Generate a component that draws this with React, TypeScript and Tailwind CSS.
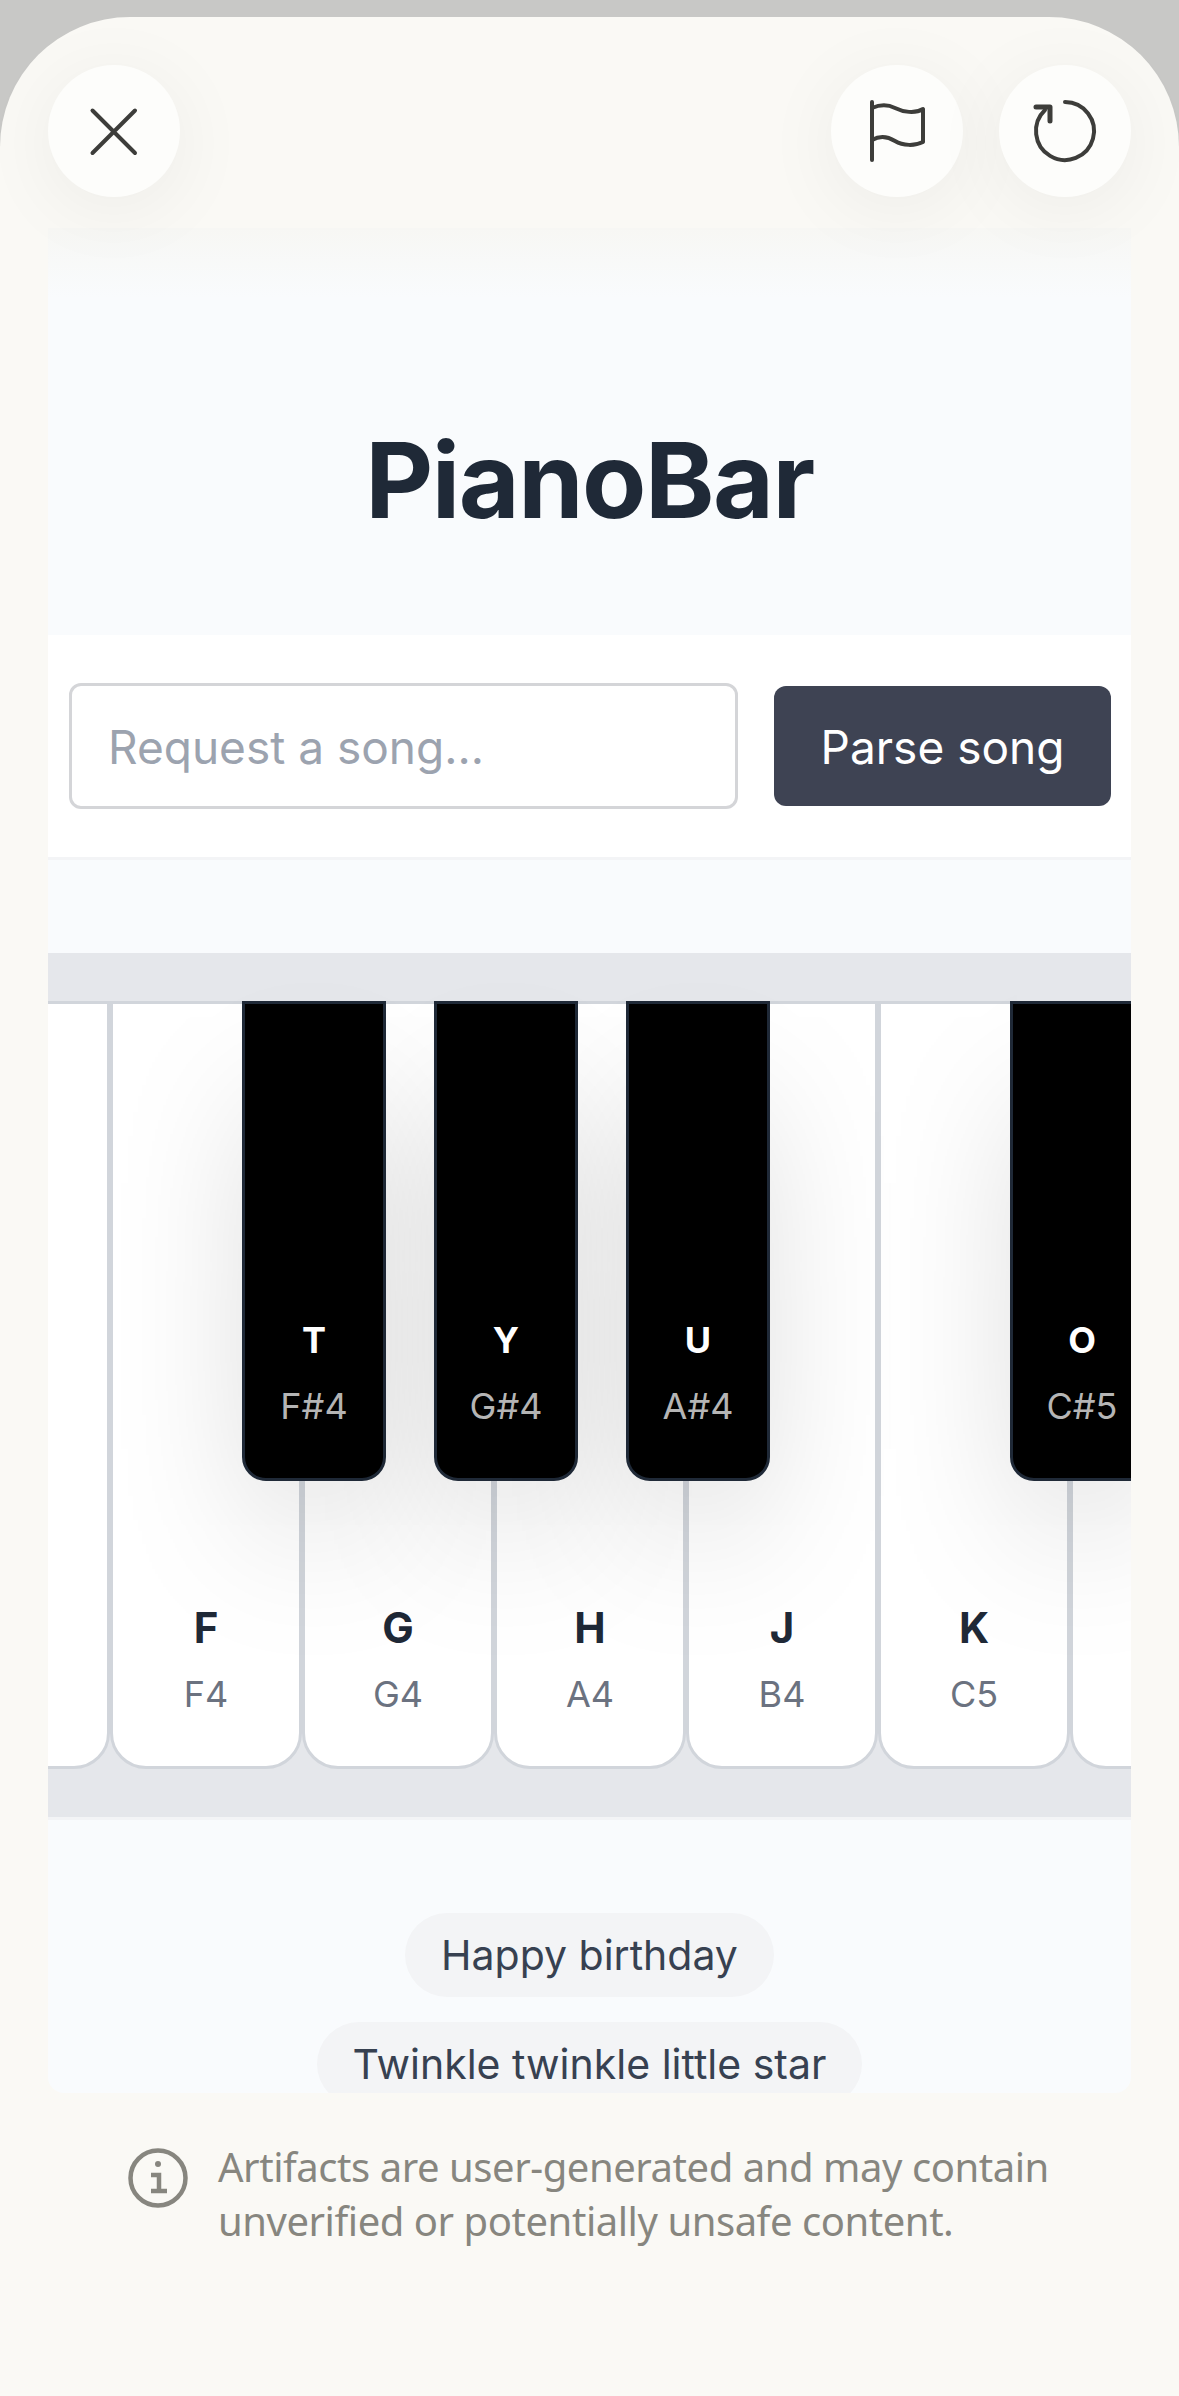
const whiteKeys = [
  { id: "e", key: "", note: "" },
  { id: "f", key: "F", note: "F4" },
  { id: "g", key: "G", note: "G4" },
  { id: "h", key: "H", note: "A4" },
  { id: "j", key: "J", note: "B4" },
  { id: "k", key: "K", note: "C5" },
  { id: "l", key: "", note: "" },
];

const blackKeys = [
  { key: "T", note: "F#4", pos: "left-[324px]" },
  { key: "Y", note: "G#4", pos: "left-[516px]" },
  { key: "U", note: "A#4", pos: "left-[708px]" },
  { key: "O", note: "C#5", pos: "left-[1092px]" },
];

function RoundButton({ children }: React.PropsWithChildren) {
  return (
    <button className="relative z-10 h-[132px] w-[132px] rounded-full bg-[#fdfdfb] shadow-[0_12px_80px_rgba(0,0,0,0.06)]">
      <svg viewBox="0 0 132 132" className="h-[132px] w-[132px]" fill="none" stroke="#3d3d3a" strokeWidth="4" strokeLinecap="round" strokeLinejoin="round">
        {children}
      </svg>
    </button>
  );
}

export default function App() {
  return (
    <div className="flex h-[2396px] w-[1179px] flex-col overflow-hidden bg-[#c8c8c6] pt-[17px] font-['Inter',sans-serif]">
      <div className="flex-1 rounded-t-[130px] bg-[#faf9f5] px-[48px] pt-[48px]">
        {/* Top buttons */}
        <div className="flex items-center justify-between">
          <RoundButton>
            <path d="M44.5 45.5L87 88M87 45.5L44.5 88" />
          </RoundButton>
          <div className="flex gap-[36px]">
            <RoundButton>
              <path d="M41 37V95" />
              <path d="M41 43C48 40 56 39 64 43S84 49 92 44V77C84 81 72 81 64 76S48 71 41 75" />
            </RoundButton>
            <RoundButton>
              <path d="M66 37A29 29 0 1 1 46 45" />
              <path d="M37 42H51V56" strokeWidth="5" />
            </RoundButton>
          </div>
        </div>

        {/* Artifact panel */}
        <div className="relative mt-[31px] h-[1865px] overflow-hidden rounded-b-[16px] bg-[#f9fbfd]">
          <div className="absolute inset-x-0 top-0 h-[70px] bg-gradient-to-b from-[#f7f7f4] to-transparent" />
          <h1 className="relative pb-[95px] pt-[192px] text-center text-[105px] font-bold leading-[120px] tracking-[-1.5px] text-[#1f2937]">PianoBar</h1>

          {/* Request form */}
          <div className="flex items-center gap-[36px] border-b-[3px] border-[#f3f4f6] bg-white py-[48px] pl-[21px] pr-[20px]">
            <div className="flex h-[126px] w-[669px] items-center rounded-[12px] border-[3px] border-[#d4d5d8] px-[36px] pt-[2px] text-[46px] text-[#9ca3af]">
              Request a song...
            </div>
            <button className="h-[120px] flex-1 rounded-[12px] bg-[#3e4353] pt-[2px] text-[46px] text-white">Parse song</button>
          </div>

          {/* Keyboard */}
          <div className="mt-[93px] border-b-[3px] border-[#f3f4f6] bg-[#e5e7eb] py-[48px]">
            <div className="relative -ml-[130px] flex h-[768px] w-[1344px]">
              {whiteKeys.map((k) => (
                <div key={k.id} className="flex h-[768px] w-[192px] shrink-0 flex-col items-center justify-end rounded-b-[36px] border-[3px] border-[#d1d5db] bg-white pb-[48px]">
                  <span className="text-[42px] font-bold leading-[60px] text-[#1f2937]">{k.key}</span>
                  <span className="mt-[12px] text-[36px] leading-[48px] text-[#6b7280]">{k.note}</span>
                </div>
              ))}
              {blackKeys.map((k) => (
                <div key={k.key} className={`absolute top-0 flex h-[480px] w-[144px] flex-col items-center justify-end rounded-b-[24px] border-[3px] border-[#1f2937] bg-black pb-[48px] shadow-[0_75px_150px_-36px_rgba(0,0,0,0.25)] ${k.pos}`}>
                  <span className="text-[36px] font-bold leading-[48px] text-white">{k.key}</span>
                  <span className="mt-[18px] text-[36px] leading-[48px] text-[#b5b5b5]">{k.note}</span>
                </div>
              ))}
            </div>
          </div>

          {/* Song suggestions */}
          <div className="flex flex-col items-center gap-[25px] pt-[93px]">
            <span className="rounded-full bg-[#f3f4f6] px-[36px] py-[12px] text-[41px] leading-[60px] text-[#374151]">Happy birthday</span>
            <span className="rounded-full bg-[#f3f4f6] px-[36px] py-[12px] text-[41px] leading-[60px] text-[#374151]">Twinkle twinkle little star</span>
          </div>
        </div>

        {/* Disclaimer */}
        <div className="mt-[47px] flex gap-[30px] pl-[80px]">
          <svg viewBox="0 0 60 60" className="mt-[8px] h-[60px] w-[60px] shrink-0" fill="none" stroke="#87867f" strokeWidth="4.5">
            <circle cx="30" cy="30" r="27.5" />
            <circle cx="30" cy="16" r="3" fill="#87867f" stroke="none" />
            <path d="M23 27H31V43M23 43H39" />
          </svg>
          <p className="font-['Noto_Sans',sans-serif] text-[40px] leading-[54px] tracking-[-0.45px] text-[#87867f]">
            Artifacts are user-generated and may contain
            <br />
            unverified or potentially unsafe content.
          </p>
        </div>
      </div>
    </div>
  );
}
